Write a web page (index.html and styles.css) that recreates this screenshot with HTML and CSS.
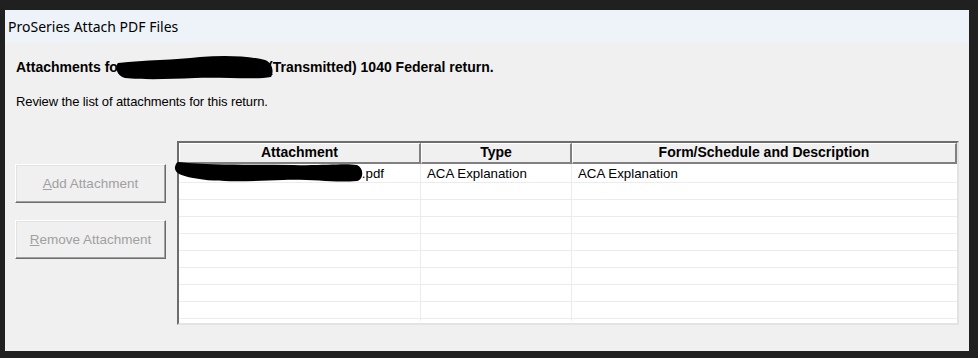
FILE: index.html
```html
<!DOCTYPE html>
<html lang="en">
<head>
    <meta charset="UTF-8">
    <title>ProSeries Attach PDF Files</title>
    <link rel="stylesheet" href="styles.css">
</head>
<body>
    <div class="window">
        <div class="titlebar">ProSeries Attach PDF Files</div>
        <div class="content">
            <p class="heading"><span class="lead">Attachments fo</span>(Transmitted) 1040 Federal return.</p>
            <p class="intro">Review the list of attachments for this return.</p>

            <div class="main">
                <div class="buttons">
                    <button disabled><u>A</u>dd Attachment</button>
                    <button disabled><u>R</u>emove Attachment</button>
                </div>

                <div class="grid">
                    <div class="grid-head">
                        <div class="hcell c1">Attachment</div>
                        <div class="hcell c2">Type</div>
                        <div class="hcell c3">Form/Schedule and Description</div>
                    </div>
                    <div class="grid-body">
                        <div class="row first">
                            <div class="cell c1 pdf">.pdf</div>
                            <div class="cell c2">ACA Explanation</div>
                            <div class="cell c3">ACA Explanation</div>
                        </div>
                        <div class="row"><div class="cell c1"></div><div class="cell c2"></div><div class="cell c3"></div></div>
                        <div class="row"><div class="cell c1"></div><div class="cell c2"></div><div class="cell c3"></div></div>
                        <div class="row"><div class="cell c1"></div><div class="cell c2"></div><div class="cell c3"></div></div>
                        <div class="row"><div class="cell c1"></div><div class="cell c2"></div><div class="cell c3"></div></div>
                        <div class="row"><div class="cell c1"></div><div class="cell c2"></div><div class="cell c3"></div></div>
                        <div class="row"><div class="cell c1"></div><div class="cell c2"></div><div class="cell c3"></div></div>
                        <div class="row"><div class="cell c1"></div><div class="cell c2"></div><div class="cell c3"></div></div>
                        <div class="row"><div class="cell c1"></div><div class="cell c2"></div><div class="cell c3"></div></div>
                        <div class="row"><div class="cell c1"></div><div class="cell c2"></div><div class="cell c3"></div></div>
                    </div>
                </div>
            </div>
        </div>

        <!-- redaction marks drawn over the text -->
        <svg class="redact redact-name" width="160" height="28" viewBox="0 0 160 28">
            <path d="M3 9 C30 6 60 6 85 3 C110 1 135 2 150 6 C158 9 159 18 156 23 C140 26 110 23 80 24 C55 25 30 26 10 24 C1 22 0 12 3 9 Z" fill="#000"/>
        </svg>
        <svg class="redact redact-file" width="192" height="26" viewBox="0 0 192 26">
            <path d="M6 3 C40 7 80 5 120 6 C150 7 170 4 184 6 C191 9 191 20 184 22 C160 24 140 20 110 21 C80 22 45 24 20 19 C8 17 1 14 2 8 C3 4 4 3 6 3 Z" fill="#000"/>
        </svg>
    </div>
</body>
</html>
```

FILE: styles.css
```css
body {
    margin: 0;
    background: #202020;
    font-family: "Liberation Sans", Arial, sans-serif;
}
.window {
    position: relative;
    margin: 10px 0 0 5px;
    width: 964px;
    height: 341px;
    background: #f0f0f0;
}
.titlebar {
    height: 33px;
    line-height: 33px;
    padding-left: 3px;
    background: #eef3f9;
    font-family: "Noto Sans", sans-serif;
    font-size: 14px;
    color: #000;
}
.content {
    padding: 16px 10px 0 11px;
}
.heading {
    margin: 0;
    font-size: 14px;
    font-weight: bold;
    line-height: 16px;
    color: #000;
}
.lead {
    display: inline-block;
    width: 252px;
    white-space: nowrap;
}
.intro {
    margin: 19px 0 0 0;
    font-size: 13px;
    line-height: 16px;
    letter-spacing: -0.1px;
    color: #000;
}
.main {
    display: flex;
    margin-top: 31px;
}
.buttons {
    display: flex;
    flex-direction: column;
    gap: 17px;
    margin-top: 23px;
    margin-left: -1px;
    width: 151px;
}
button {
    height: 39px;
    background: #f0f0f0;
    border: 1px solid;
    border-color: #ffffff #6d6d6d #6d6d6d #ffffff;
    box-shadow: inset -1px -1px 0 #a0a0a0, inset 1px 1px 0 #e3e3e3;
    font-family: "Liberation Sans", Arial, sans-serif;
    font-size: 13.5px;
    color: #a0a0a0;
    padding: 0;
}
.grid {
    margin-left: 11px;
    width: 778px;
    height: 180px;
    border-top: 2px solid #6d6d6d;
    border-left: 2px solid #6d6d6d;
    border-right: 2px solid #e3e3e3;
    border-bottom: 2px solid #e3e3e3;
    background: #fff;
    overflow: hidden;
}
.grid-head {
    display: flex;
    height: 21px;
}
.hcell {
    box-sizing: border-box;
    height: 21px;
    background: #f0f0f0;
    border-top: 1px solid #fff;
    border-left: 1px solid #fff;
    border-right: 2px solid #808080;
    border-bottom: 2px solid #808080;
    text-align: center;
    font-size: 14px;
    font-weight: bold;
    line-height: 17px;
    color: #000;
}
.c1 { width: 242px; }
.c2 { width: 151px; }
.c3 { flex: 1; }
.grid-body {
    height: 157px;
    overflow: hidden;
}
.row {
    display: flex;
    height: 17px;
    border-bottom: 1px solid #ececec;
    box-sizing: border-box;
}
.row.first {
    height: 19px;
}
.cell {
    box-sizing: border-box;
    border-right: 1px solid #ececec;
    padding-left: 6px;
    font-size: 13.3px;
    line-height: 19px;
    color: #000;
}
.c3.cell { border-right: none; }
.pdf {
    text-align: right;
    padding-right: 36px;
}
.redact {
    position: absolute;
}
.redact-name {
    left: 110px;
    top: 44px;
}
.redact-file {
    left: 168px;
    top: 149px;
}
```
